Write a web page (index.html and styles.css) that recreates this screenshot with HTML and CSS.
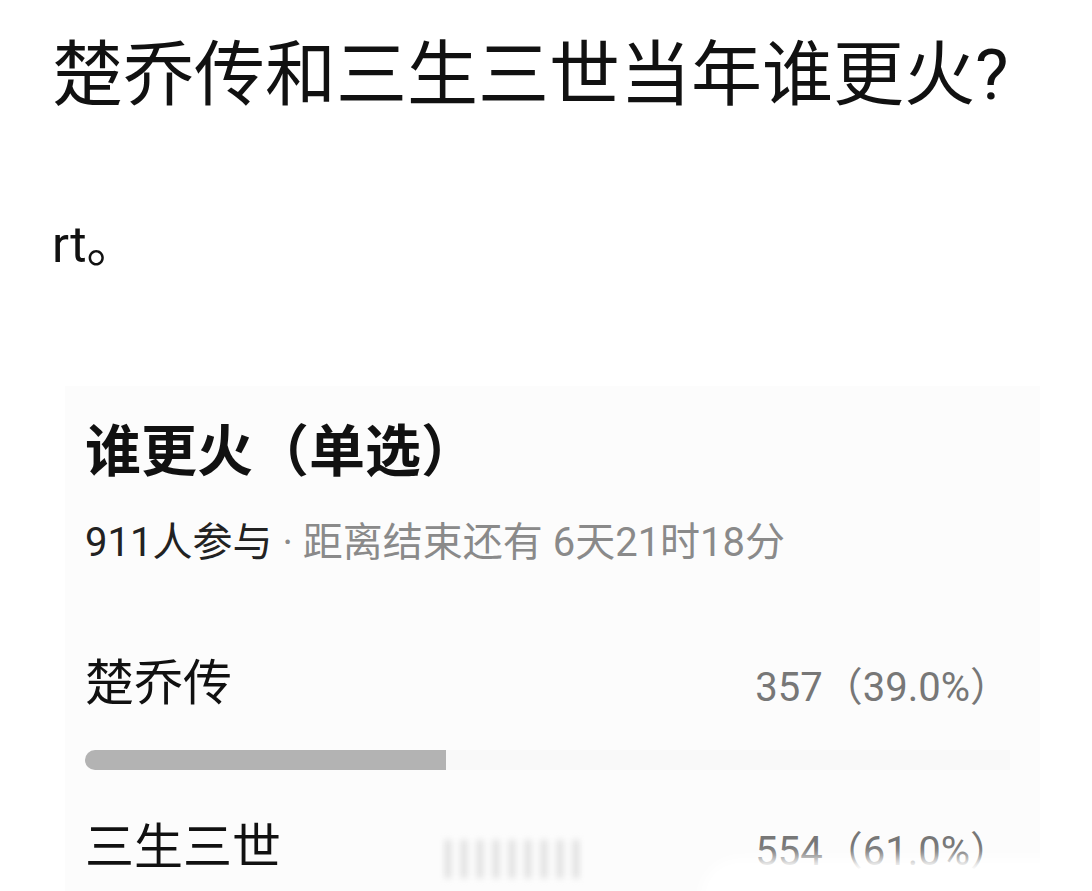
FILE: index.html
```html
<!DOCTYPE html>
<html lang="zh-CN">
<head>
    <meta charset="UTF-8">
    <meta name="viewport" content="width=device-width, initial-scale=1.0">
    <title>楚乔传和三生三世当年谁更火?</title>
    <link rel="stylesheet" href="styles.css">
</head>
<body>

    <div class="post">
        <h1 class="post-title">楚乔传和三生三世当年谁更火?</h1>
        <p class="post-body">rt。</p>

        <div class="poll">
            <h2 class="poll-title">谁更火（单选）</h2>
            <div class="poll-meta">
                <span class="poll-count">911人参与</span>
                <span class="poll-deadline"> · 距离结束还有 6天21时18分</span>
            </div>

            <div class="poll-option">
                <div class="option-row">
                    <span class="option-name">楚乔传</span>
                    <span class="option-votes">357（39.0%）</span>
                </div>
                <div class="option-track">
                    <div class="option-bar" style="width: 39%;"></div>
                </div>
            </div>

            <div class="poll-option poll-option-next">
                <div class="option-row">
                    <span class="option-name">三生三世</span>
                    <span class="option-votes">554（61.0%）</span>
                </div>
            </div>
        </div>
    </div>

    <!-- faint site mark along the bottom edge -->
    <div class="mark"></div>
    <div class="mark-fade"></div>

</body>
</html>
```

FILE: styles.css
```css
body {
    margin: 0;
    background-color: #fff;
    font-family: Roboto, "Noto Sans CJK SC", sans-serif;
    color: #111;
    overflow: hidden;
}
.post {
    padding: 30px 0 0 52px;
}
.post-title {
    margin: 0;
    font-size: 71px;
    font-weight: 400;
    line-height: 90px;
    letter-spacing: 0;
}
.post-body {
    margin: 95px 0 0 0;
    font-size: 50px;
    line-height: 60px;
}
.poll {
    margin: 111px 0 0 13px;
    width: 955px;
    padding: 30px 0 40px 20px;
    background-color: #fcfcfc;
}
.poll-title {
    margin: 0;
    font-size: 56px;
    font-weight: 700;
    line-height: 72px;
}
.poll-meta {
    margin-top: 31px;
    font-size: 40px;
    line-height: 48px;
}
.poll-count {
    color: #222;
}
.poll-deadline {
    color: #8a8a8a;
}
.poll-option {
    margin-top: 87px;
    padding-right: 30px;
}
.poll-option-next {
    margin-top: 48px;
}
.option-row {
    display: flex;
    justify-content: space-between;
    align-items: center;
}
.option-name {
    font-size: 49px;
    line-height: 60px;
}
.option-votes {
    font-size: 40px;
    color: #777;
}
.option-track {
    margin-top: 36px;
    height: 20px;
    background-color: #f9f9f9;
    border-radius: 10px 0 0 10px;
}
.option-bar {
    height: 100%;
    background-color: #b3b3b3;
    border-radius: 10px 0 0 10px;
}
.mark {
    position: absolute;
    left: 445px;
    top: 840px;
    width: 135px;
    height: 38px;
    background: repeating-linear-gradient(90deg, #ddd 0 6px, transparent 6px 16px);
    filter: blur(3px);
}
.mark-fade {
    position: absolute;
    left: 700px;
    top: 858px;
    width: 430px;
    height: 60px;
    background-color: #fff;
    border-radius: 40px 0 0 0;
    filter: blur(7px);
}
```
